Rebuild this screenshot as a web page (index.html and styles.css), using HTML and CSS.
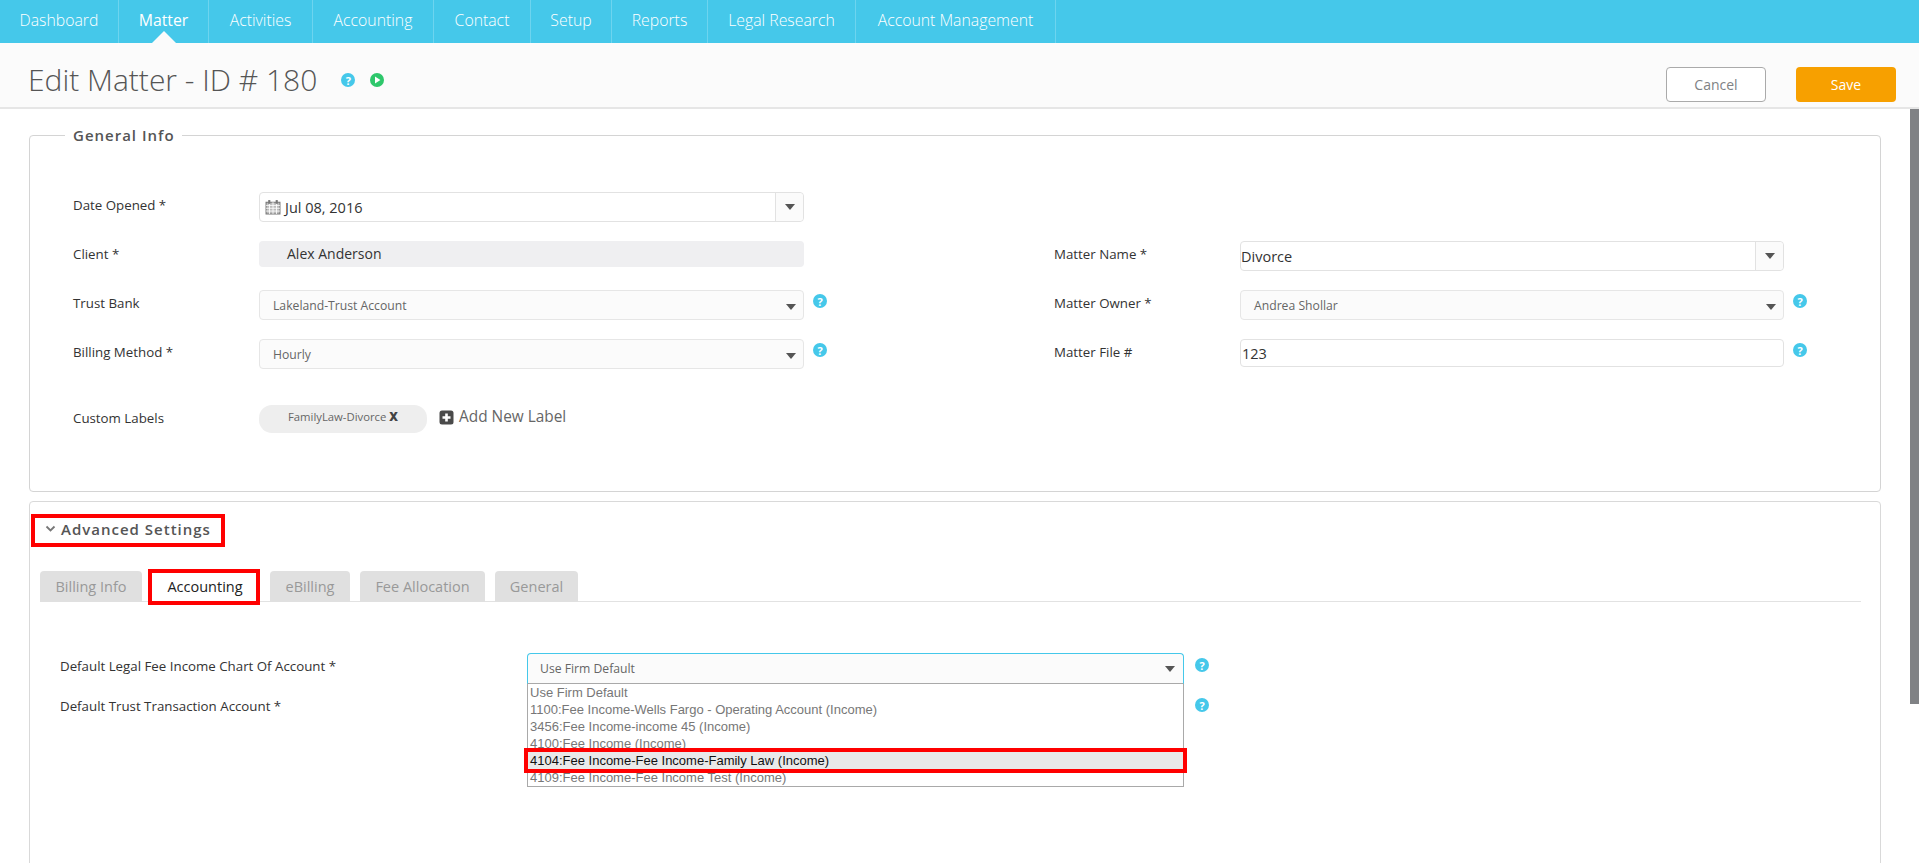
FILE: index.html
```html
<!DOCTYPE html>
<html lang="en">
<head>
<meta charset="utf-8">
<title>Edit Matter</title>
<link rel="stylesheet" href="styles.css">
</head>
<body>
<nav class="topnav">
  <a class="nav-item w1">Dashboard</a>
  <a class="nav-item w2 active">Matter</a>
  <a class="nav-item w3">Activities</a>
  <a class="nav-item w4">Accounting</a>
  <a class="nav-item w5">Contact</a>
  <a class="nav-item w6">Setup</a>
  <a class="nav-item w7">Reports</a>
  <a class="nav-item w8">Legal Research</a>
  <a class="nav-item w9">Account Management</a>
</nav>
<header class="pagehead">
  <h1 class="title">Edit Matter - ID # 180</h1>
  <span class="help head-help">?</span>
  <svg class="play" width="14" height="14" viewBox="0 0 14 14"><circle cx="7" cy="7" r="7" fill="#2ec76b"/><path d="M5 3.6 10.4 7 5 10.4Z" fill="#fff"/></svg>
  <div class="head-actions">
    <button class="btn cancel">Cancel</button>
    <button class="btn save">Save</button>
  </div>
</header>
<div class="workspace">
  <main class="content">
    <fieldset class="general">
      <legend>General Info</legend>
      <div class="form-grid">
        <label class="lbl">Date Opened *</label>
        <div class="ctl combo date">
          <span class="combo-val">
            <svg class="cal" width="16" height="16" viewBox="0 0 15 15"><path d="M1 3h13v11H1Z" fill="#bbb" stroke="#777"/><path d="M1 6h13M1 8.700h13M1 11.300h13M4.200 3v11M7.500 3v11M10.800 3v11" stroke="#fff" stroke-width=".8"/><rect x="3" y="1" width="2" height="3.500" fill="#777"/><rect x="10" y="1" width="2" height="3.500" fill="#777"/></svg>
            Jul 08, 2016
          </span>
          <span class="caret-box"><i class="caret"></i></span>
        </div>
        <span class="end"></span>
        <span class="end"></span>
        <span class="end"></span>
        <span class="end"></span>

        <label class="lbl">Client *</label>
        <div class="ctl client">Alex Anderson</div>
        <span></span>
        <label class="lbl">Matter Name *</label>
        <div class="ctl combo name">
          <span class="combo-val plain">Divorce</span>
          <span class="caret-box"><i class="caret"></i></span>
        </div>
        <span></span>

        <label class="lbl">Trust Bank</label>
        <div class="ctl sel">Lakeland-Trust Account<i class="caret"></i></div>
        <span class="help">?</span>
        <label class="lbl">Matter Owner *</label>
        <div class="ctl sel">Andrea Shollar<i class="caret"></i></div>
        <span class="help">?</span>

        <label class="lbl">Billing Method *</label>
        <div class="ctl sel">Hourly<i class="caret"></i></div>
        <span class="help">?</span>
        <label class="lbl">Matter File #</label>
        <div class="ctl input">123</div>
        <span class="help">?</span>
      </div>
      <div class="labels-row">
        <label class="lbl">Custom Labels</label>
        <span class="chip">FamilyLaw-Divorce <b>X</b></span>
        <a class="add-label">
          <svg width="15" height="15" viewBox="0 0 15 15"><rect x="0.500" y="0.500" width="14" height="14" rx="2.500" fill="#4a4a4a"/><path d="M7.500 3.500v8M3.500 7.500h8" stroke="#fff" stroke-width="2.600"/></svg>
          Add New Label
        </a>
      </div>
    </fieldset>

    <section class="advanced">
      <h2 class="adv-head">
        <svg width="11" height="8" viewBox="0 0 11 8"><path d="M1.500 1.500 5.500 5.500 9.500 1.500" fill="none" stroke="#777" stroke-width="1.800"/></svg>
        Advanced Settings
      </h2>
      <div class="tabs">
        <a class="tab t1">Billing Info</a>
        <a class="tab t2 current">Accounting</a>
        <a class="tab t3">eBilling</a>
        <a class="tab t4">Fee Allocation</a>
        <a class="tab t5">General</a>
      </div>
      <div class="acct">
        <div class="acct-labels">
          <label class="lbl">Default Legal Fee Income Chart Of Account *</label>
          <label class="lbl">Default Trust Transaction Account *</label>
        </div>
        <div class="acct-select">
          <div class="open-sel">Use Firm Default<i class="caret"></i></div>
          <ul class="options">
            <li>Use Firm Default</li>
            <li>1100:Fee Income-Wells Fargo - Operating Account (Income)</li>
            <li>3456:Fee Income-income 45 (Income)</li>
            <li>4100:Fee Income (Income)</li>
            <li class="picked">4104:Fee Income-Fee Income-Family Law (Income)</li>
            <li>4109:Fee Income-Fee Income Test (Income)</li>
          </ul>
        </div>
        <div class="acct-help">
          <span class="help">?</span>
          <span class="help">?</span>
        </div>
      </div>
    </section>
  </main>
  <div class="scrolltrack"><div class="scrollthumb"></div></div>
</div>
</body>
</html>
```

FILE: styles.css
```css
* { box-sizing: border-box; }
html, body { height: 100%; }
body {
  margin: 0;
  overflow: hidden;
  background: #fff;
  font-family: "Open Sans", sans-serif;
  color: #333;
}

.topnav { display: flex; height: 43px; background: #45c8ea; }
.nav-item {
  position: relative;
  display: flex;
  align-items: center;
  justify-content: center;
  padding-bottom: 3px;
  font-size: 15.8px;
  font-weight: 300;
  color: #fff;
  border-right: 1px solid #6dd4ef;
}
.nav-item.active { font-weight: 400; }
.nav-item.active::after {
  content: "";
  position: absolute;
  left: 50%;
  bottom: 0;
  margin-left: -12px;
  border: 12px solid transparent;
  border-top: 0;
  border-bottom: 12px solid #fbfbfb;
}
.w1 { width: 119px; } .w2 { width: 90px; } .w3 { width: 104px; }
.w4 { width: 121px; } .w5 { width: 97px; } .w6 { width: 81px; }
.w7 { width: 96px; } .w8 { width: 148px; } .w9 { width: 200px; }

.pagehead {
  display: flex;
  align-items: center;
  height: 66px;
  padding: 10px 23px 0 28px;
  background: #fbfbfb;
  border-bottom: 2px solid #e6e6e6;
}
.title {
  margin: 0 24px 0 0;
  font-size: 30px;
  font-weight: 300;
  color: #555;
  line-height: 1;
}
.play { margin-left: 15px; }
.head-actions { display: flex; gap: 30px; margin-left: auto; margin-top: 8px; }
.btn {
  width: 100px;
  height: 35px;
  border-radius: 4px;
  font: 400 14px "Open Sans", sans-serif;
}
.cancel { background: #fff; border: 1px solid #aaa; color: #808285; }
.save { background: #f7a000; border: 0; color: #fff; }

.help {
  display: inline-flex;
  flex: none;
  align-items: center;
  justify-content: center;
  width: 14px;
  height: 14px;
  border-radius: 50%;
  background: #45c8ea;
  color: #fff;
  font: 700 11px/1 "Open Sans", sans-serif;
}

.workspace { display: flex; height: 754px; }
.content { flex: 1; min-width: 0; padding: 16px 29px 0; overflow: hidden; }
.scrolltrack { width: 9px; flex: none; }
.scrollthumb { height: 595px; background: #808285; }

.general {
  margin: 0;
  padding: 47px 0 0 43px;
  height: 367px;
  border: 1px solid #d4d4d4;
  border-radius: 4px;
}
.general legend {
  margin-left: -8px;
  padding: 0 7px 0 8px;
  font-size: 15px;
  font-weight: 600;
  letter-spacing: 1px;
  color: #555;
  line-height: 20px;
}
.form-grid {
  display: grid;
  grid-template-columns: 186px 545px 250px 186px 544px 24px;
  grid-auto-rows: 49px;
  align-items: start;
}
.lbl { font-size: 13.3px; color: #333; line-height: 24px; }
.form-grid > .lbl { margin-top: 1px; }
.ctl { border-radius: 4px; }
.combo {
  display: flex;
  height: 30px;
  border: 1px solid #e2e2e2;
  background: #fff;
}
.combo-val {
  flex: 1;
  display: flex;
  align-items: center;
  gap: 4px;
  padding-left: 5px;
  font-size: 14.5px;
  color: #333;
}
.combo-val.plain { padding-left: 0; }
.caret-box {
  width: 28px;
  display: flex;
  align-items: center;
  justify-content: center;
  background: #fbfbfb;
  border-left: 1px solid #e2e2e2;
  border-radius: 0 4px 4px 0;
}
.caret {
  display: inline-block;
  border: 5px solid transparent;
  border-top: 6px solid #555;
  border-bottom: 0;
}
.client {
  height: 26px;
  padding-left: 28px;
  background: #efeff1;
  font-size: 14px;
  line-height: 26px;
  color: #333;
}
.sel {
  display: flex;
  align-items: center;
  justify-content: space-between;
  height: 30px;
  padding: 0 7px 0 13px;
  border: 1px solid #e6e6e6;
  background: #fbfbfb;
  font-size: 12.2px;
  color: #666;
}
.sel .caret { margin-top: 3px; }
.input {
  height: 28px;
  padding-left: 1px;
  border: 1px solid #e2e2e2;
  font-size: 14.5px;
  line-height: 27px;
  color: #333;
}
.form-grid > .help { margin-left: 9px; margin-top: 4px; }

.labels-row {
  display: flex;
  align-items: flex-start;
  margin-top: 17px;
}
.labels-row .lbl { width: 186px; margin-top: 1px; }
.chip {
  width: 168px;
  height: 28px;
  border-radius: 13px;
  background: #eee;
  font-size: 11.3px;
  line-height: 24px;
  text-align: center;
  color: #666;
}
.chip b { color: #444; font-size: 12px; font-weight: 800; }
.add-label {
  display: flex;
  align-items: center;
  gap: 5px;
  margin-left: 12px;
  font-size: 15.4px;
  line-height: 24px;
  color: #666;
}

.advanced {
  height: 400px;
  margin-top: 9px;
  padding: 12px 19px 0 1px;
  border: 1px solid #d9d9d9;
  border-radius: 4px;
}
.adv-head {
  display: flex;
  align-items: center;
  gap: 5px;
  width: 194px;
  height: 33px;
  margin: 0;
  padding: 0 0 3px 10px;
  border: 4px solid #f00;
  font-size: 15px;
  font-weight: 600;
  letter-spacing: 1px;
  color: #555;
}
.tabs {
  display: flex;
  align-items: flex-end;
  height: 37px;
  margin: 18px 0 0 9px;
  border-bottom: 1px solid #e2e2e2;
}
.tab {
  display: flex;
  align-items: center;
  justify-content: center;
  height: 31px;
  margin-bottom: -1px;
  padding-bottom: 1px;
  border-radius: 4px 4px 0 0;
  background: #e0e0e0;
  font-size: 14.5px;
  font-weight: 400;
  color: #999;
}
.t1 { width: 102px; margin-right: 6px; }
.t2 { width: 112px; margin-right: 10px; }
.t3 { width: 80px; margin-right: 10px; }
.t4 { width: 125px; margin-right: 10px; }
.t5 { width: 83px; }
.tab.current {
  height: 36px;
  margin-bottom: -4px;
  padding: 0 0 1px 2px;
  background: #fff;
  border: 4px solid #f00;
  border-radius: 0;
  color: #222;
}

.acct { display: flex; align-items: flex-start; padding: 51px 0 0 29px; }
.acct-labels {
  display: flex;
  flex-direction: column;
  gap: 16px;
  width: 467px;
  padding-top: 1px;
}
.acct-select { width: 657px; flex: none; }
.open-sel {
  display: flex;
  align-items: center;
  justify-content: space-between;
  height: 31px;
  padding: 0 8px 0 12px;
  border: 1px solid #45c8ea;
  border-bottom-color: #a9a9a9;
  border-radius: 4px 4px 0 0;
  background: #fbfbfb;
  font-size: 12.2px;
  color: #666;
}
.options {
  position: relative;
  height: 103px;
  margin: 0;
  padding: 0;
  list-style: none;
  border: 1px solid #a9a9a9;
  border-top: 0;
  font: 13px/17px "Liberation Sans", sans-serif;
  color: #777;
}
.options li { height: 17px; padding-left: 2px; white-space: nowrap; }
.options .picked {
  position: relative;
  background: #e9e9e9;
  color: #111;
  outline: 4px solid #f00;
  outline-offset: 0;
}
.acct-help {
  display: flex;
  flex-direction: column;
  gap: 26px;
  margin: 5px 0 0 11px;
}
```
